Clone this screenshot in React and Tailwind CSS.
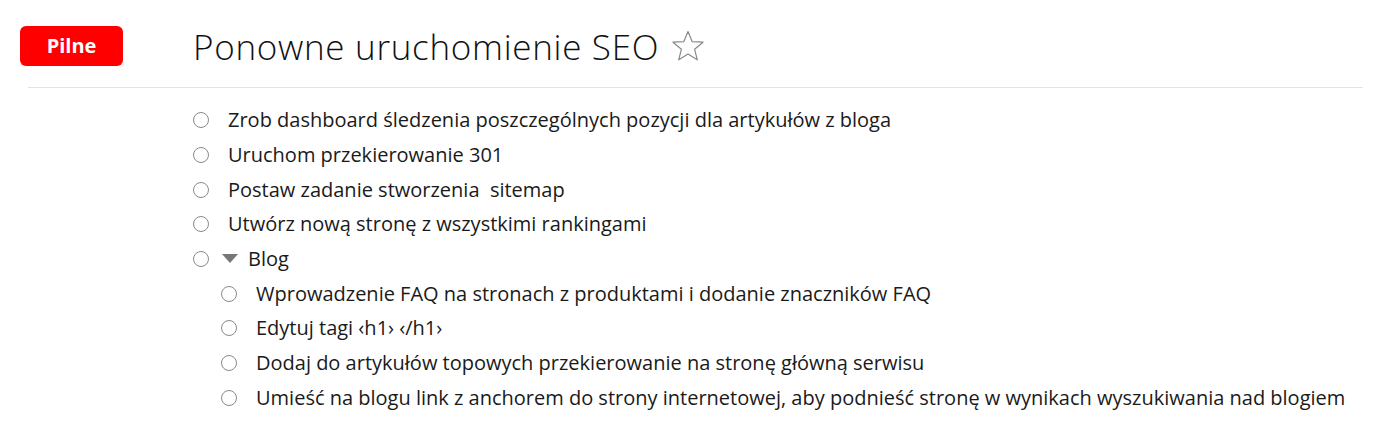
import React from 'react';

const Circle = () => (
  <span className="inline-block w-4 h-4 rounded-full border border-[#8a8a8a] bg-white shrink-0" />
);

const Star = () => (
  <svg width="34" height="32" viewBox="0 0 34 32" className="shrink-0">
    <path
      d="M17 1.5 L21.1 11.6 L32 12.2 L23.6 19.2 L26.3 29.8 L17 23.9 L7.7 29.8 L10.4 19.2 L2 12.2 L12.9 11.6 Z"
      fill="none"
      stroke="#8a8a8a"
      strokeWidth="1.2"
      strokeLinejoin="round"
    />
  </svg>
);

const Item = ({ children }) => (
  <li className="flex items-center h-[34.7px]">
    <Circle />
    <span className="ml-[19px] whitespace-pre">{children}</span>
  </li>
);

const App = () => {
  const top = [
    'Zrob dashboard śledzenia poszczególnych pozycji dla artykułów z bloga',
    'Uruchom przekierowanie 301',
    'Postaw zadanie stworzenia  sitemap',
    'Utwórz nową stronę z wszystkimi rankingami',
  ];
  const blog = [
    'Wprowadzenie FAQ na stronach z produktami i dodanie znaczników FAQ',
    'Edytuj tagi ‹h1› ‹/h1›',
    'Dodaj do artykułów topowych przekierowanie na stronę główną serwisu',
    'Umieść na blogu link z anchorem do strony internetowej, aby podnieść stronę w wynikach wyszukiwania nad blogiem',
  ];

  return (
    <div className="w-[1399px] h-[445px] bg-white text-[#1a1a1a] font-['Open_Sans',sans-serif]">
      <header className="pl-[20px] pr-[36px] pt-[26px]">
        <div className="flex items-center h-[40px]">
          <div className="w-[103px] h-[40px] rounded-[6px] bg-[#ff0000] flex items-center justify-center text-white font-bold text-[20px]">
            Pilne
          </div>
          <h1 className="ml-[70px] text-[35px] leading-none font-light tracking-[0.7px] text-[#111]">
            Ponowne uruchomienie SEO
          </h1>
          <span className="ml-[12px] mb-[1px]">
            <Star />
          </span>
        </div>
        <div className="mt-[21px] ml-[8px] border-t border-[#e3e3e3]" />
      </header>

      <ul className="pl-[193px] pt-[15px] text-[20px]">
        {top.map((t) => (
          <Item key={t}>{t}</Item>
        ))}
        <li className="flex items-center h-[34.7px]">
          <Circle />
          <svg width="18" height="12" viewBox="0 0 18 12" className="ml-[12px]">
            <path d="M1 1 L17 1 L9 10 Z" fill="#777" />
          </svg>
          <span className="ml-[9px]">Blog</span>
        </li>
        <li>
          <ul className="pl-[28px]">
            {blog.map((t) => (
              <Item key={t}>{t}</Item>
            ))}
          </ul>
        </li>
      </ul>
    </div>
  );
};

export default App;
